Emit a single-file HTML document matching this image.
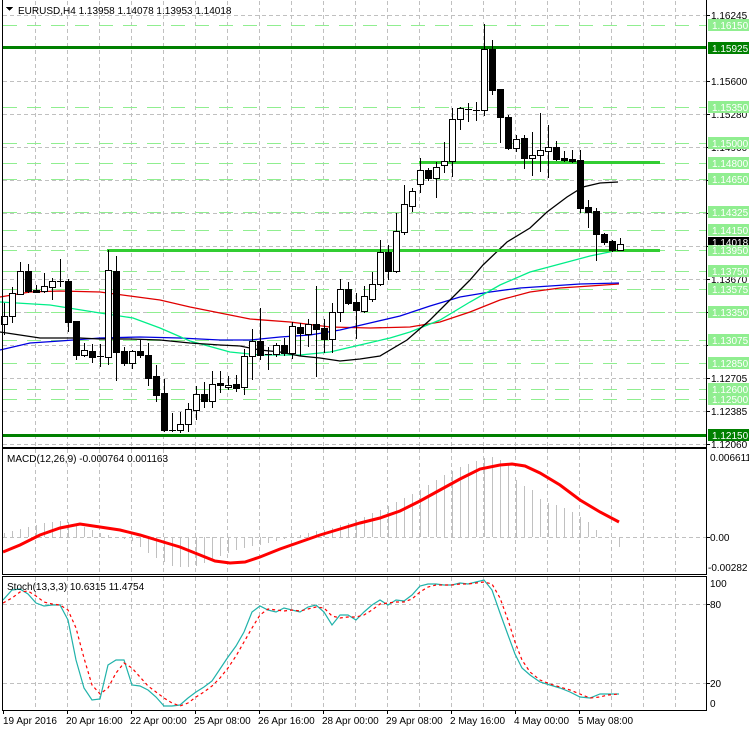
<!DOCTYPE html>
<html><head><meta charset="utf-8"><style>
html,body{margin:0;padding:0;background:#fff;}
svg{display:block;font-family:"Liberation Sans",sans-serif;font-size:10px;}
</style></head><body>
<svg width="749" height="731" viewBox="0 0 749 731" xmlns="http://www.w3.org/2000/svg" shape-rendering="crispEdges">
<rect width="749" height="731" fill="#fff"/>
<g stroke="#c0c0c0" stroke-dasharray="4,3">
<path d="M35.5 1V447M67.5 1V447M99.5 1V447M131.5 1V447M163.5 1V447M195.5 1V447M227.5 1V447M259.5 1V447M291.5 1V447M323.5 1V447M355.5 1V447M387.5 1V447M419.5 1V447M451.5 1V447M483.5 1V447M515.5 1V447M547.5 1V447M579.5 1V447M611.5 1V447M643.5 1V447M675.5 1V447"/>
<path d="M35.5 449V574M67.5 449V574M99.5 449V574M131.5 449V574M163.5 449V574M195.5 449V574M227.5 449V574M259.5 449V574M291.5 449V574M323.5 449V574M355.5 449V574M387.5 449V574M419.5 449V574M451.5 449V574M483.5 449V574M515.5 449V574M547.5 449V574M579.5 449V574M611.5 449V574M643.5 449V574M675.5 449V574"/>
<path d="M35.5 577V710M67.5 577V710M99.5 577V710M131.5 577V710M163.5 577V710M195.5 577V710M227.5 577V710M259.5 577V710M291.5 577V710M323.5 577V710M355.5 577V710M387.5 577V710M419.5 577V710M451.5 577V710M483.5 577V710M515.5 577V710M547.5 577V710M579.5 577V710M611.5 577V710M643.5 577V710M675.5 577V710"/>
<path d="M3 15.5H706M3 48.5H706M3 81.5H706M3 114.5H706M3 147.5H706M3 180.5H706M3 213.5H706M3 246.5H706M3 279.5H706M3 312.5H706M3 345.5H706M3 378.5H706M3 411.5H706M3 444.5H706"/>
<path d="M3 537.5H706M3 604.5H706M3 683.5H706"/>
</g>
<g stroke="#90ee90" stroke-dasharray="14,10" stroke-width="1">
<path d="M3 25.5H706M3 107.5H706M3 143.5H706M3 163.5H706M3 179.5H706M3 212.5H706M3 230.5H706M3 250.5H706M3 271.5H706M3 289.5H706M3 312.5H706M3 340.5H706M3 363.5H706M3 389.5H706M3 399.5H706"/>
</g>
<g fill="none" stroke-width="1.3" shape-rendering="auto">
<polyline stroke="#e00000" points="0,297 30,292 60,291 100,292 130,296 160,300 190,307 220,313 250,319 290,322 330,327 370,328 410,327 440,322 470,312 500,300 530,292 560,288 590,286 619,284"/>
<polyline stroke="#0000e0" points="0,350 30,343 60,341 100,338 140,337 180,338 220,340 250,340 280,337 310,335 340,330 370,323 400,316 430,306 460,297 490,292 520,288 550,286 580,284 619,283"/>
<polyline stroke="#00ee88" points="0,302 50,305 100,313 133,318 160,328 190,341 230,352 260,355 300,355 330,352 360,345 390,338 410,332 440,320 470,302 500,285 530,272 560,264 590,256 619,250"/>
<polyline stroke="#000" points="0,332 20,335 40,338 60,338 80,338 100,339 130,339 160,340 190,343 220,345 240,346 260,350 280,352 300,356 320,358 340,361 360,359 380,356 407,340 430,320 450,300 470,280 483,265 507,242 530,228 547,212 567,197 583,187 600,183 618,182"/>
</g>
<rect x="3" y="46" width="703" height="3" fill="#008000"/>
<rect x="3" y="434" width="703" height="3" fill="#008000"/>
<rect x="107" y="249" width="553" height="3" fill="#32cd32"/>
<rect x="419" y="161" width="241" height="3" fill="#32cd32"/>
<g stroke="#000" stroke-width="1">
<path d="M4.5 303V335M12.5 287V323M20.5 262V295M28.5 264V293M36.5 285V293M44.5 273V293M52.5 278V300M60.5 259V287M68.5 279V332M76.5 321V360M84.5 343V357M92.5 344V363M100.5 344V367M108.5 250V365M116.5 256V381M124.5 347V366M132.5 350V369M140.5 340V358M148.5 343V386M156.5 365V402M164.5 379V432M172.5 413V432M180.5 412V433M188.5 403V432M196.5 386V420M204.5 382V408M212.5 371V408M220.5 371V393M228.5 376V390M236.5 375V392M244.5 349V395M252.5 329V380M260.5 308V360M268.5 347V370M276.5 343V357M284.5 338V356M292.5 322V359M300.5 323V356M308.5 319V347M316.5 286V377M324.5 319V353M332.5 303V353M340.5 279V322M348.5 282V305M356.5 293V339M364.5 286V313M372.5 272V302M380.5 240V286M388.5 245V280M396.5 213V273M404.5 185V235M412.5 188V212M420.5 158V193M428.5 168V181M436.5 162V198M444.5 142V173M452.5 108V177M460.5 107V130M468.5 103V122M476.5 102V121M484.5 24V116M492.5 40V95M500.5 89V143M508.5 115V150M516.5 135V152M524.5 135V169M532.5 132V176M540.5 113V172M548.5 125V178M556.5 141V161M564.5 151V162M572.5 150V163M580.5 150V213M588.5 200V228M596.5 208V261M604.5 233V245M612.5 240V252M620.5 238V249"/>
<path d="M57 281.5H64M97 356.5H104M169 430.5H176M265 354.5H272M465 109.5H472M473 110.5H480"/>
<g fill="#fff">
<rect x="1.5" y="316.5" width="6" height="8"/><rect x="9.5" y="293.5" width="6" height="23"/><rect x="17.5" y="271.5" width="6" height="23"/><rect x="41.5" y="286.5" width="6" height="5"/><rect x="49.5" y="281.5" width="6" height="6"/><rect x="81.5" y="350.5" width="6" height="5"/><rect x="105.5" y="270.5" width="6" height="87"/><rect x="129.5" y="351.5" width="6" height="12"/><rect x="177.5" y="424.5" width="6" height="6"/><rect x="185.5" y="409.5" width="6" height="15"/><rect x="193.5" y="394.5" width="6" height="16"/><rect x="209.5" y="384.5" width="6" height="17"/><rect x="225.5" y="385.5" width="6" height="2"/><rect x="241.5" y="356.5" width="6" height="31"/><rect x="249.5" y="341.5" width="6" height="15"/><rect x="273.5" y="345.5" width="6" height="9"/><rect x="289.5" y="326.5" width="6" height="27"/><rect x="305.5" y="324.5" width="6" height="10"/><rect x="329.5" y="312.5" width="6" height="27"/><rect x="337.5" y="289.5" width="6" height="23"/><rect x="361.5" y="296.5" width="6" height="15"/><rect x="369.5" y="284.5" width="6" height="15"/><rect x="377.5" y="252.5" width="6" height="32"/><rect x="393.5" y="231.5" width="6" height="40"/><rect x="401.5" y="204.5" width="6" height="28"/><rect x="409.5" y="191.5" width="6" height="15"/><rect x="417.5" y="170.5" width="6" height="14"/><rect x="433.5" y="167.5" width="6" height="11"/><rect x="441.5" y="161.5" width="6" height="4"/><rect x="449.5" y="119.5" width="6" height="42"/><rect x="457.5" y="108.5" width="6" height="11"/><rect x="481.5" y="49.5" width="6" height="61"/><rect x="513.5" y="139.5" width="6" height="9"/><rect x="529.5" y="155.5" width="6" height="3"/><rect x="537.5" y="150.5" width="6" height="5"/><rect x="545.5" y="147.5" width="6" height="4"/><rect x="617.5" y="244.5" width="6" height="6"/>
</g>
<g fill="#000">
<rect x="25.5" y="271.5" width="6" height="20"/><rect x="33.5" y="290.5" width="6" height="2"/><rect x="65.5" y="281.5" width="6" height="41"/><rect x="73.5" y="321.5" width="6" height="34"/><rect x="89.5" y="351.5" width="6" height="6"/><rect x="113.5" y="271.5" width="6" height="81"/><rect x="121.5" y="351.5" width="6" height="12"/><rect x="137.5" y="351.5" width="6" height="4"/><rect x="145.5" y="355.5" width="6" height="23"/><rect x="153.5" y="376.5" width="6" height="19"/><rect x="161.5" y="393.5" width="6" height="37"/><rect x="201.5" y="394.5" width="6" height="7"/><rect x="217.5" y="383.5" width="6" height="2"/><rect x="233.5" y="384.5" width="6" height="4"/><rect x="257.5" y="341.5" width="6" height="14"/><rect x="281.5" y="345.5" width="6" height="8"/><rect x="297.5" y="327.5" width="6" height="6"/><rect x="313.5" y="324.5" width="6" height="5"/><rect x="321.5" y="328.5" width="6" height="11"/><rect x="345.5" y="289.5" width="6" height="14"/><rect x="353.5" y="302.5" width="6" height="8"/><rect x="385.5" y="252.5" width="6" height="19"/><rect x="425.5" y="170.5" width="6" height="8"/><rect x="489.5" y="49.5" width="6" height="41"/><rect x="497.5" y="89.5" width="6" height="28"/><rect x="505.5" y="117.5" width="6" height="31"/><rect x="521.5" y="138.5" width="6" height="20"/><rect x="553.5" y="147.5" width="6" height="12"/><rect x="561.5" y="158.5" width="6" height="2"/><rect x="569.5" y="159.5" width="6" height="2"/><rect x="577.5" y="160.5" width="6" height="48"/><rect x="585.5" y="207.5" width="6" height="5"/><rect x="593.5" y="211.5" width="6" height="23"/><rect x="601.5" y="234.5" width="6" height="8"/><rect x="609.5" y="241.5" width="6" height="9"/>
</g>
</g>
<g stroke="#c0c0c0">
<path d="M4.5 537V533M12.5 537V531M20.5 537V529M28.5 537V527M36.5 537V525M44.5 537V523M52.5 537V522M60.5 537V521M68.5 537V522M76.5 537V524M84.5 537V527M92.5 537V530M100.5 537V533M108.5 537V535M116.5 537V537M124.5 537V539M132.5 537V541M140.5 537V547M148.5 537V553M156.5 537V558M164.5 537V562M172.5 537V566M180.5 537V567M188.5 537V567M196.5 537V566M204.5 537V563M212.5 537V559M220.5 537V556M228.5 537V553M236.5 537V550M244.5 537V548M252.5 537V546M260.5 537V545M268.5 537V543M276.5 537V541M284.5 537V539M292.5 537V537M300.5 537V535M308.5 537V533M316.5 537V531M324.5 537V530M332.5 537V528M340.5 537V525M348.5 537V523M356.5 537V520M364.5 537V517M372.5 537V513M380.5 537V510M388.5 537V506M396.5 537V502M404.5 537V498M412.5 537V494M420.5 537V490M428.5 537V485M436.5 537V480M444.5 537V475M452.5 537V471M460.5 537V467M468.5 537V464M476.5 537V461M484.5 537V458M492.5 537V457M500.5 537V460M508.5 537V465M516.5 537V480M524.5 537V486M532.5 537V490M540.5 537V499M548.5 537V503M556.5 537V505M564.5 537V508M572.5 537V512M580.5 537V517M588.5 537V522M596.5 537V530M619.5 537V547"/>
</g>
<polyline fill="none" stroke="#ff0000" stroke-width="3" shape-rendering="auto" points="3,552 20,545 40,535 60,528 80,524 100,527 120,530 140,535 160,541 180,547 200,555 215,561 230,563 245,562 260,557 280,549 300,542 320,535 340,529 360,523 380,518 400,511 420,501 440,490 460,479 480,469 500,465 512,464 525,466 540,473 560,485 580,500 600,512 619,522"/>
<polyline fill="none" stroke="#20b2aa" stroke-width="1.2" shape-rendering="auto" points="3,600 12,590 20,589 28,594 36,603 44,606 52,605 60,605 68,620 76,660 84,688 92,700 100,699 108,665 116,660 124,660 132,685 140,686 148,690 156,697 164,706 172,706 180,705 188,698 196,692 204,687 212,681 220,669 228,657 236,646 244,632 252,612 260,606 268,610 276,612 284,608 292,610 300,612 308,607 316,605 324,612 332,625 340,615 348,615 356,620 364,612 372,605 380,600 388,605 396,600 404,601 412,595 420,586 428,584 436,584 444,585 452,585 460,583 468,584 476,582 484,580 492,590 500,613 508,635 515,654 522,668 530,675 540,682 550,685 560,688 570,692 580,697 590,698 600,694 608,694 619,694"/>
<polyline fill="none" stroke="#ff0000" stroke-width="1.2" stroke-dasharray="3,3" shape-rendering="auto" points="3,603 12,598 20,592 28,591 36,596 44,602 52,604 60,605 68,610 76,628 84,658 92,685 100,694 108,688 116,673 124,663 132,668 140,677 148,686 156,692 164,698 172,703 180,706 188,703 196,697 204,692 212,686 220,678 228,668 236,656 244,642 252,628 260,615 268,609 276,610 284,611 292,610 300,611 308,609 316,607 324,608 332,616 340,618 348,617 356,617 364,615 372,610 380,604 388,603 396,602 404,602 412,599 420,592 428,587 436,585 444,585 452,585 460,584 468,584 476,583 484,582 492,584 500,598 508,620 515,642 522,660 530,672 540,680 550,684 560,687 570,690 580,694 590,698 600,697 608,695 619,694"/>
<g fill="none" stroke="#000">
<path d="M2.5 0V447.5H706.5V0"/>
<rect x="2.5" y="448.5" width="704" height="126"/>
<rect x="2.5" y="576.5" width="704" height="134"/>
</g>
<g stroke="#000"><path d="M706 15.5H710M706 81.5H710M706 114.5H710M706 147.5H710M706 180.5H710M706 213.5H710M706 246.5H710M706 279.5H710M706 312.5H710M706 345.5H710M706 378.5H710M706 411.5H710M706 444.5H710M706 537.5H710M706 604.5H710M706 683.5H710M67.5 710V714M131.5 710V714M195.5 710V714M259.5 710V714M323.5 710V714M387.5 710V714M451.5 710V714M515.5 710V714M579.5 710V714M3.5 710V714"/></g>
<g fill="#000">
<text x="711" y="19">1.16245</text>
<text x="711" y="85">1.15600</text>
<text x="711" y="118">1.15280</text>
<text x="711" y="151">1.14960</text>
<text x="711" y="283">1.13670</text>
<text x="711" y="316">1.13025</text>
<text x="711" y="382">1.12705</text>
<text x="711" y="415">1.12385</text>
<text x="711" y="448">1.12060</text>
<text x="710" y="461">0.006611</text>
<text x="710" y="541">0.00</text>
<text x="708" y="571">-0.00282</text>
<text x="710" y="587">100</text>
<text x="710" y="608">80</text>
<text x="710" y="687">20</text>
<text x="710" y="707">0</text>
</g>
<g>
<rect x="708" y="19" width="41" height="12" fill="#90ee90"/>
<rect x="708" y="101" width="41" height="12" fill="#90ee90"/>
<rect x="708" y="137" width="41" height="12" fill="#90ee90"/>
<rect x="708" y="157" width="41" height="12" fill="#90ee90"/>
<rect x="708" y="173" width="41" height="12" fill="#90ee90"/>
<rect x="708" y="206" width="41" height="12" fill="#90ee90"/>
<rect x="708" y="224" width="41" height="12" fill="#90ee90"/>
<rect x="708" y="237" width="41" height="11" fill="#000"/>
<rect x="708" y="245" width="41" height="11" fill="#90ee90"/>
<rect x="708" y="265" width="41" height="12" fill="#90ee90"/>
<rect x="708" y="283" width="41" height="12" fill="#90ee90"/>
<rect x="708" y="306" width="41" height="12" fill="#90ee90"/>
<rect x="708" y="334" width="41" height="12" fill="#90ee90"/>
<rect x="708" y="357" width="41" height="12" fill="#90ee90"/>
<rect x="708" y="383" width="41" height="12" fill="#90ee90"/>
<rect x="708" y="393" width="41" height="12" fill="#90ee90"/>
<rect x="708" y="42" width="41" height="12" fill="#008000"/>
<rect x="708" y="429" width="41" height="12" fill="#008000"/>
</g>
<g fill="#fff">
<text x="712" y="29">1.16150</text>
<text x="712" y="52">1.15925</text>
<text x="712" y="111">1.15350</text>
<text x="712" y="147">1.15000</text>
<text x="712" y="167">1.14800</text>
<text x="712" y="183">1.14650</text>
<text x="712" y="216">1.14325</text>
<text x="712" y="234">1.14150</text>
<text x="712" y="246">1.14018</text>
<text x="712" y="254">1.13950</text>
<text x="712" y="275">1.13750</text>
<text x="712" y="293">1.13575</text>
<text x="712" y="316">1.13350</text>
<text x="712" y="344">1.13075</text>
<text x="712" y="367">1.12850</text>
<text x="712" y="393">1.12600</text>
<text x="712" y="403">1.12500</text>
<text x="712" y="439">1.12150</text>
</g>
<path d="M6 7H13L9.5 11Z" fill="#000"/>
<text x="18" y="14" fill="#000">EURUSD,H4  1.13958 1.14078 1.13953 1.14018</text>
<text x="7" y="462" fill="#000">MACD(12,26,9) -0.000764 0.001163</text>
<text x="7" y="590" fill="#000">Stoch(13,3,3) 10.6315 11.4754</text>
<g fill="#000">
<text x="3" y="724">19 Apr 2016</text>
<text x="66" y="724">20 Apr 16:00</text>
<text x="130" y="724">22 Apr 00:00</text>
<text x="194" y="724">25 Apr 08:00</text>
<text x="258" y="724">26 Apr 16:00</text>
<text x="322" y="724">28 Apr 00:00</text>
<text x="386" y="724">29 Apr 08:00</text>
<text x="450" y="724">2 May 16:00</text>
<text x="514" y="724">4 May 00:00</text>
<text x="578" y="724">5 May 08:00</text>
</g>
</svg>
</body></html>
